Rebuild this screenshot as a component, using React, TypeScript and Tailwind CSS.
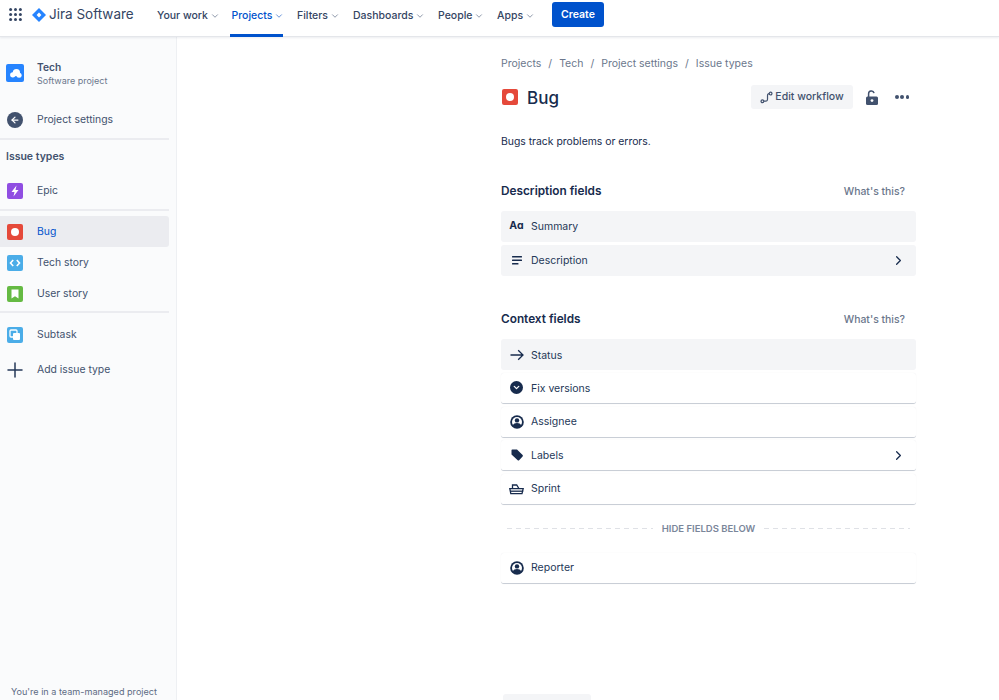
import { ChevronDown, ChevronRight, ArrowLeft, Plus } from 'lucide-react'
import type { ReactNode } from 'react'

const navItems = [
  { label: 'Your work', width: 'w-[74.5px]' },
  { label: 'Projects', width: 'w-[65.5px]', active: true },
  { label: 'Filters', width: 'w-[56px]' },
  { label: 'Dashboards', width: 'w-[85px]' },
  { label: 'People', width: 'w-[59px]' },
  { label: 'Apps', width: 'w-[55px]' },
]

function IssueIcon({ bg, children }: { bg: string; children: ReactNode }) {
  return (
    <span className={`flex h-4 w-4 shrink-0 items-center justify-center rounded-[2px] ${bg}`}>
      {children}
    </span>
  )
}

const bugIcon = (
  <IssueIcon bg="bg-[#e5493a]">
    <span className="h-[8px] w-[8px] rounded-full bg-white" />
  </IssueIcon>
)

const personIcon = (
  <svg viewBox="0 0 14 14" className="h-[14px] w-[14px]">
    <circle cx="7" cy="7" r="6.8" fill="#172b4d" />
    <circle cx="7" cy="7" r="5" fill="#fff" />
    <circle cx="7" cy="5.4" r="2.2" fill="#172b4d" />
    <path d="M2.8 10.4C3.5 8.7 5 8 7 8s3.5.7 4.2 2.4A5 5 0 0 1 7 12.5a5 5 0 0 1-4.2-2.1z" fill="#172b4d" />
  </svg>
)

function FieldRow({ icon, label, filled, chevron }: { icon: ReactNode; label: string; filled?: boolean; chevron?: boolean }) {
  return (
    <div
      className={`flex h-[31px] items-center rounded-[3px] pr-[10px] ${
        filled ? 'bg-[#f4f5f7]' : 'border-b border-[#c9ced6] bg-white shadow-[0_0_1px_rgba(9,30,66,0.1)]'
      }`}
    >
      <span className="flex w-[30px] shrink-0 justify-center pl-[1px] text-[#172b4d]">{icon}</span>
      <span className="pt-[1px] text-[10.5px] text-[#253858]">{label}</span>
      {chevron && <ChevronRight className="ml-auto h-[15px] w-[15px] text-[#172b4d]" strokeWidth={2} />}
    </div>
  )
}

function SectionHeader({ title }: { title: string }) {
  return (
    <div className="flex items-center justify-between pr-[11px]">
      <h2 className="text-[11.8px] font-semibold text-[#172b4d]">{title}</h2>
      <span className="text-[10.4px] font-medium text-[#6b778c]">What's this?</span>
    </div>
  )
}

export default function App() {
  return (
    <div className="flex h-[700px] w-[999px] flex-col overflow-hidden bg-white font-['Inter',sans-serif]">
      {/* Top bar */}
      <header className="relative z-10 flex h-[37px] shrink-0 items-stretch border-b border-[#e4e6ea] bg-white shadow-[0_1px_2px_rgba(9,30,66,0.08)]">
        <div className="flex w-[157px] shrink-0 items-center pb-[7px] pl-[9px]">
          <svg viewBox="0 0 13 13" className="h-[13px] w-[13px] fill-[#344563]">
            <circle cx="1.6" cy="1.6" r="1.5" />
            <circle cx="6.5" cy="1.6" r="1.5" />
            <circle cx="11.4" cy="1.6" r="1.5" />
            <circle cx="1.6" cy="6.5" r="1.5" />
            <circle cx="6.5" cy="6.5" r="1.5" />
            <circle cx="11.4" cy="6.5" r="1.5" />
            <circle cx="1.6" cy="11.4" r="1.5" />
            <circle cx="6.5" cy="11.4" r="1.5" />
            <circle cx="11.4" cy="11.4" r="1.5" />
          </svg>
          <svg viewBox="0 0 14 14" className="ml-[10px] h-[14px] w-[14px]">
            <path d="M7 0l7 7-7 7-7-7z" fill="#2684ff" />
            <path d="M7 4.6L9.4 7 7 9.4 4.6 7z" fill="#fff" />
          </svg>
          <span className="ml-[3px] text-[13.5px] leading-none text-[#344563]">Jira Software</span>
        </div>
        {navItems.map((item) => (
          <div key={item.label} className={`relative flex shrink-0 items-center pb-[5px] ${item.width}`}>
            <span className={`text-[10.5px] font-medium ${item.active ? 'text-[#0052cc]' : 'text-[#344563]'}`}>
              {item.label}
            </span>
            <ChevronDown className={`ml-[2px] h-[10px] w-[10px] ${item.active ? 'text-[#4c7fd1]' : 'text-[#7a869a]'}`} />
            {item.active && <span className="absolute -bottom-[1px] -left-[2px] h-[3px] w-[53px] bg-[#0052cc]" />}
          </div>
        ))}
        <div className="mt-[2px] flex h-[25px] w-[52px] items-center justify-center rounded-[3px] bg-[#0052cc] pt-[1px] text-[10.5px] font-semibold text-white">
          Create
        </div>
      </header>

      <div className="flex min-h-0 flex-1">
        {/* Sidebar */}
        <aside className="flex w-[177px] shrink-0 flex-col border-r border-[#eef0f3] bg-[#fafbfc] pr-[7px]">
          <div className="flex items-start pt-[27px] pl-[6px]">
            <span className="flex h-[18px] w-[18px] items-center justify-center rounded-[2px] bg-[#2684ff]">
              <svg viewBox="0 0 14 10" className="h-[9px] w-[13px] fill-white">
                <circle cx="4" cy="6.5" r="3" />
                <circle cx="8" cy="4" r="4" />
                <circle cx="11" cy="7" r="2.8" />
              </svg>
            </span>
            <div className="-mt-[3px] ml-[13px]">
              <div className="text-[10.2px] leading-[13px] font-semibold text-[#42526e]">Tech</div>
              <div className="text-[9px] leading-[13px] text-[#6b778c]">Software project</div>
            </div>
          </div>
          <div className="mt-[23px] flex h-[20px] items-center pl-[7px]">
            <span className="flex h-4 w-4 items-center justify-center rounded-full bg-[#42526e]">
              <ArrowLeft className="h-[10px] w-[10px] text-white" strokeWidth={3} />
            </span>
            <span className="ml-[14px] text-[10.4px] text-[#42526e]">Project settings</span>
          </div>
          <div className="mt-[8px] h-[2px] bg-[#ebecf0]" />
          <div className="pt-[10px] pl-[6px] text-[10.5px] leading-[13px] font-semibold text-[#42526e]">Issue types</div>

          <div className="mt-[18px] flex h-[20px] items-center pl-[7px]">
            <IssueIcon bg="bg-[#904ee2]">
              <svg viewBox="0 0 16 16" className="h-4 w-4 fill-white">
                <path d="M9.5 2.5L4.5 9h3L6.5 13.5 11.5 7h-3z" />
              </svg>
            </IssueIcon>
            <span className="ml-[14px] text-[10.4px] text-[#42526e]">Epic</span>
          </div>
          <div className="mt-[8px] h-[2px] bg-[#ebecf0]" />

          <div className="mt-[5px] flex h-[31px] items-center rounded-r-[3px] bg-[#ebecf0] pl-[7px]">
            {bugIcon}
            <span className="ml-[14px] text-[10.4px] text-[#0052cc]">Bug</span>
          </div>
          <div className="flex h-[31px] items-center pl-[7px]">
            <IssueIcon bg="bg-[#4bade8]">
              <svg viewBox="0 0 16 16" className="h-4 w-4 fill-none stroke-white stroke-[1.6]">
                <path d="M6.2 5L3.5 8l2.7 3M9.8 5l2.7 3-2.7 3" />
              </svg>
            </IssueIcon>
            <span className="ml-[14px] text-[10.4px] text-[#42526e]">Tech story</span>
          </div>
          <div className="flex h-[31px] items-center pl-[7px]">
            <IssueIcon bg="bg-[#65ba43]">
              <svg viewBox="0 0 16 16" className="h-4 w-4 fill-white">
                <path d="M4.5 3.5h7v9L8 10.2l-3.5 2.3z" />
              </svg>
            </IssueIcon>
            <span className="ml-[14px] text-[10.4px] text-[#42526e]">User story</span>
          </div>
          <div className="mt-[2px] h-[2px] bg-[#ebecf0]" />
          <div className="mt-[12px] flex h-[20px] items-center pl-[7px]">
            <IssueIcon bg="bg-[#4bade8]">
              <svg viewBox="0 0 16 16" className="h-4 w-4">
                <rect x="3" y="3" width="7" height="7" rx="1" fill="none" stroke="#fff" strokeWidth="1.3" />
                <rect x="6" y="6" width="7" height="7" rx="1" fill="#fff" />
              </svg>
            </IssueIcon>
            <span className="ml-[14px] text-[10.4px] text-[#42526e]">Subtask</span>
          </div>
          <div className="mt-[15px] flex h-[20px] items-center pl-[3px]">
            <Plus className="h-6 w-6 shrink-0 text-[#253858]" strokeWidth={1.5} />
            <span className="ml-[10px] text-[10.4px] text-[#42526e]">Add issue type</span>
          </div>
          <div className="mt-auto pb-[2px] pl-[11px] text-[9.1px] leading-[13px] whitespace-nowrap text-[#5e6c84]">
            You're in a team-managed project
          </div>
        </aside>

        {/* Main */}
        <main className="min-w-0 flex-1 pl-[324px]">
          <div className="relative h-full w-[415px] pt-[20px]">
            <div className="flex h-[13px] items-center pt-[1px] text-[10.5px] text-[#6b778c]">
              <span>Projects</span>
              <span className="mx-[7px]">/</span>
              <span>Tech</span>
              <span className="mx-[7px]">/</span>
              <span>Project settings</span>
              <span className="mx-[7px]">/</span>
              <span>Issue types</span>
            </div>

            <div className="mt-[14px] flex h-[26px] items-center">
              <span className="ml-[1px]">{bugIcon}</span>
              <h1 className="mt-[2px] ml-[9px] text-[17px] leading-none font-medium text-[#172b4d]">Bug</h1>
              <div className="ml-auto flex h-[24px] w-[102px] items-center justify-center rounded-[3px] bg-[#f4f5f7] text-[10.5px] font-medium text-[#42526e]">
                <svg viewBox="0 0 14 14" className="mr-[2px] h-[13px] w-[13px] fill-none stroke-[#42526e] stroke-[1.3]">
                  <circle cx="2.6" cy="11" r="1.5" />
                  <circle cx="11.4" cy="2.8" r="1.5" />
                  <path d="M4.2 11h2.3c1.2 0 1.6-.8 1.6-2V5c0-1.4.6-2.2 1.8-2.2" />
                </svg>
                Edit workflow
              </div>
              <span className="ml-[11px] flex w-[16px] justify-center">
                <svg viewBox="0 0 12 15" className="h-[15px] w-[12px]">
                  <path d="M2.6 7V3.8a2.8 2.8 0 0 1 5.5-.7" fill="none" stroke="#42526e" strokeWidth="1.5" />
                  <rect x="0" y="6.6" width="12" height="8.4" rx="1.5" fill="#42526e" />
                  <circle cx="6" cy="10.6" r="1.4" fill="#fff" />
                </svg>
              </span>
              <span className="mr-[7px] ml-[15px] flex gap-[1.75px]">
                <span className="h-[3.5px] w-[3.5px] rounded-full bg-[#42526e]" />
                <span className="h-[3.5px] w-[3.5px] rounded-full bg-[#42526e]" />
                <span className="h-[3.5px] w-[3.5px] rounded-full bg-[#42526e]" />
              </span>
            </div>

            <p className="mt-[25px] text-[10.4px] leading-[14px] text-[#172b4d]">Bugs track problems or errors.</p>

            <div className="mt-[34px]">
              <SectionHeader title="Description fields" />
            </div>
            <div className="mt-[10px] flex flex-col gap-[3px]">
              <FieldRow filled icon={<span className="text-[10.5px] font-bold">Aɑ</span>} label="Summary" />
              <FieldRow
                filled
                chevron
                icon={
                  <svg viewBox="0 0 10 9" className="h-[9px] w-[10px] fill-[#172b4d]">
                    <rect y="0" width="10" height="1.5" rx="0.5" />
                    <rect y="3.5" width="10" height="1.5" rx="0.5" />
                    <rect y="7" width="6.5" height="1.5" rx="0.5" />
                  </svg>
                }
                label="Description"
              />
            </div>

            <div className="mt-[35px]">
              <SectionHeader title="Context fields" />
            </div>
            <div className="mt-[11px] flex flex-col gap-[2.6px]">
              <FieldRow
                filled
                icon={
                  <svg viewBox="0 0 14 14" className="h-[14px] w-[14px] fill-none stroke-[#172b4d] stroke-[1.3]">
                    <path d="M.5 7h12.5M8.2 2.2L13 7l-4.8 4.8" />
                  </svg>
                }
                label="Status"
              />
              <FieldRow
                icon={
                  <span className="flex h-[13px] w-[13px] items-center justify-center rounded-full bg-[#172b4d]">
                    <ChevronDown className="h-[9px] w-[9px] text-white" strokeWidth={3.5} />
                  </span>
                }
                label="Fix versions"
              />
              <FieldRow icon={personIcon} label="Assignee" />
              <FieldRow
                chevron
                icon={
                  <svg viewBox="0 0 14 14" className="h-[14px] w-[14px] fill-[#172b4d]">
                    <path d="M1.5 2.3a.8.8 0 0 1 .8-.8H7l5.6 5.6a1 1 0 0 1 0 1.4l-3.5 3.7a1 1 0 0 1-1.4 0L1.5 6.6z" />
                  </svg>
                }
                label="Labels"
              />
              <FieldRow
                icon={
                  <svg viewBox="0 0 15 14" className="h-[14px] w-[15px] fill-none stroke-[#172b4d] stroke-[1.3]">
                    <path d="M3.5 6.5V3h4.2l2.2 3.5" />
                    <path d="M.8 6.6h13.4l-1.2 5H1.8z" />
                    <path d="M1.2 9.2h13" />
                  </svg>
                }
                label="Sprint"
              />
            </div>

            <div className="mt-[17px] flex items-center px-[6px]">
              <span className="h-px flex-1 bg-[repeating-linear-gradient(90deg,#dfe1e6_0_5px,transparent_5px_9px)]" />
              <span className="mx-[9px] text-[9.5px] leading-[13px] font-semibold text-[#7a869a]">HIDE FIELDS BELOW</span>
              <span className="h-px flex-1 bg-[repeating-linear-gradient(90deg,#dfe1e6_0_5px,transparent_5px_9px)]" />
            </div>

            <div className="mt-[18px]">
              <FieldRow icon={personIcon} label="Reporter" />
            </div>

            <div className="absolute bottom-0 left-[2px] h-[6px] w-[88px] rounded-t-[3px] bg-[#f4f5f7]" />
          </div>
        </main>
      </div>
    </div>
  )
}
